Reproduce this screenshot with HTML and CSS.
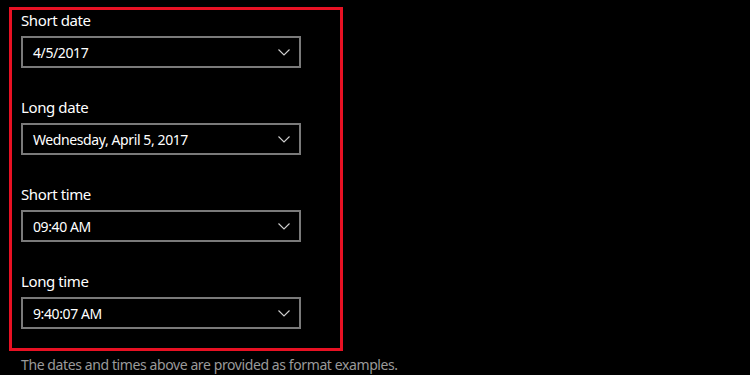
FILE: index.html
```html
<!DOCTYPE html>
<html lang="en">
<head>
    <meta charset="UTF-8">
    <meta name="viewport" content="width=device-width, initial-scale=1.0">
    <title>Formats</title>
    <link rel="stylesheet" href="styles.css">
</head>
<body>

    <div class="panel">
        <div class="field">
            <div class="label">Short date</div>
            <div class="select">
                <span>4/5/2017</span>
                <svg class="chevron" width="12" height="7" viewBox="0 0 12 7"><path d="M0.5 0.5 L6 6 L11.5 0.5" fill="none" stroke="#d0d0d0" stroke-width="1.1"/></svg>
            </div>
        </div>
        <div class="field">
            <div class="label">Long date</div>
            <div class="select">
                <span>Wednesday, April 5, 2017</span>
                <svg class="chevron" width="12" height="7" viewBox="0 0 12 7"><path d="M0.5 0.5 L6 6 L11.5 0.5" fill="none" stroke="#d0d0d0" stroke-width="1.1"/></svg>
            </div>
        </div>
        <div class="field">
            <div class="label">Short time</div>
            <div class="select">
                <span>09:40 AM</span>
                <svg class="chevron" width="12" height="7" viewBox="0 0 12 7"><path d="M0.5 0.5 L6 6 L11.5 0.5" fill="none" stroke="#d0d0d0" stroke-width="1.1"/></svg>
            </div>
        </div>
        <div class="field">
            <div class="label">Long time</div>
            <div class="select">
                <span>9:40:07 AM</span>
                <svg class="chevron" width="12" height="7" viewBox="0 0 12 7"><path d="M0.5 0.5 L6 6 L11.5 0.5" fill="none" stroke="#d0d0d0" stroke-width="1.1"/></svg>
            </div>
        </div>
    </div>

    <p class="note">The dates and times above are provided as format examples.</p>

</body>
</html>
```

FILE: styles.css
```css
body {
    margin: 0;
    background: #000;
    color: #fff;
    font-family: "Noto Sans", "Open Sans", sans-serif;
    font-size: 14px;
    letter-spacing: -0.4px;
}
.panel {
    width: 319px;
    margin: 7px 0 0 9px;
    border: 3px solid #e81123;
    padding: 0 0 19px 9px;
}
.field {
    margin-bottom: 29px;
}
.field:last-child {
    margin-bottom: 0;
}
.label {
    height: 20px;
    line-height: 20px;
    margin-bottom: 6px;
    font-size: 15px;
}
.select {
    width: 280px;
    height: 32px;
    box-sizing: border-box;
    border: 2px solid #7a7a7a;
    padding: 0 9px 0 10px;
    display: flex;
    align-items: center;
    justify-content: space-between;
}
.chevron {
    display: block;
}
.note {
    margin: 4px 0 0 21px;
    line-height: 20px;
    color: #9a9a9a;
}
```
